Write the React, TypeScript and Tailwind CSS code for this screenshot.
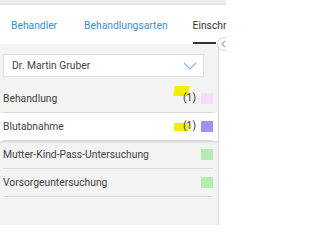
const rows = [
  { name: "Behandlung", count: 1, color: "bg-[#fbdcf8]", active: false },
  { name: "Blutabnahme", count: 1, color: "bg-[#a88cf6]", active: true },
  { name: "Mutter-Kind-Pass-Untersuchung", count: 0, color: "bg-[#b4ecb2]", active: false },
  { name: "Vorsorgeuntersuchung", count: 0, color: "bg-[#b4ecb2]", active: false },
];

export default function App() {
  return (
    <div className="w-[226px] h-[225px] overflow-hidden bg-white font-['Roboto',sans-serif] text-[#424242]">
      <div className="h-[5px] bg-[#ececec] border-b border-[#e2e2e2]" />
      <div className="relative flex h-[39px] items-center whitespace-nowrap pt-[3px] text-[10.3px]">
        <span className="ml-[11px] text-[#3b8ed8]">Behandler</span>
        <span className="ml-[27px] text-[#3b8ed8]">Behandlungsarten</span>
        <span className="ml-[25px] text-[#333]">Einschränkungen</span>
        <div className="absolute left-[193px] bottom-0 h-[2px] w-[23px] bg-[#333]" />
      </div>
      <div className="relative flex h-[181px]">
        <div className="w-[219px] shrink-0 bg-[#f3f3f3] border-r border-[#dcdcdc] pt-[10px]">
          <div className="ml-[3px] flex h-[23px] w-[201px] items-center justify-between border border-[#dedede] bg-white pl-[8px] pr-[6px] text-[10.3px]">
            <span>Dr. Martin Gruber</span>
            <svg width="14" height="8" viewBox="0 0 14 8" fill="none">
              <path d="M1 1l6 6 6-6" stroke="#8ab4dd" strokeWidth="1.2" />
            </svg>
          </div>
          <div className="mt-[8px] text-[10.3px]">
            {rows.map((r) => (
              <div
                key={r.name}
                className={`relative flex h-[28px] items-center pl-[3px] pr-[5px] ${
                  r.active ? "bg-white shadow-[0_1px_2px_rgba(0,0,0,0.15)]" : ""
                }`}
              >
                <div className="flex h-full flex-1 items-center justify-between border-b border-[#dadada]">
                  <span>{r.name}</span>
                  <div className="flex items-center gap-[5px]">
                    {r.count > 0 && (
                      <span className="relative leading-none text-[#333]">
                        <span
                          className={`absolute -left-[9px] w-[15px] -skew-x-6 bg-[#f3ee00] ${
                            r.active ? "top-[2px] h-[8px]" : "-top-[7px] h-[10px]"
                          }`}
                        />
                        <span className="relative">({r.count})</span>
                      </span>
                    )}
                    <span className={`h-[11px] w-[12px] ${r.color}`} />
                  </div>
                </div>
              </div>
            ))}
          </div>
        </div>
        <div className="absolute left-[217px] -top-[7px] flex h-[14px] w-[14px] items-center rounded-full border border-[#d6d6d6] bg-white pl-[3px]">
          <svg width="5" height="8" viewBox="0 0 5 8" fill="none">
            <path d="M4 1L1 4l3 3" stroke="#8ab4dd" strokeWidth="1.2" />
          </svg>
        </div>
      </div>
    </div>
  );
}
